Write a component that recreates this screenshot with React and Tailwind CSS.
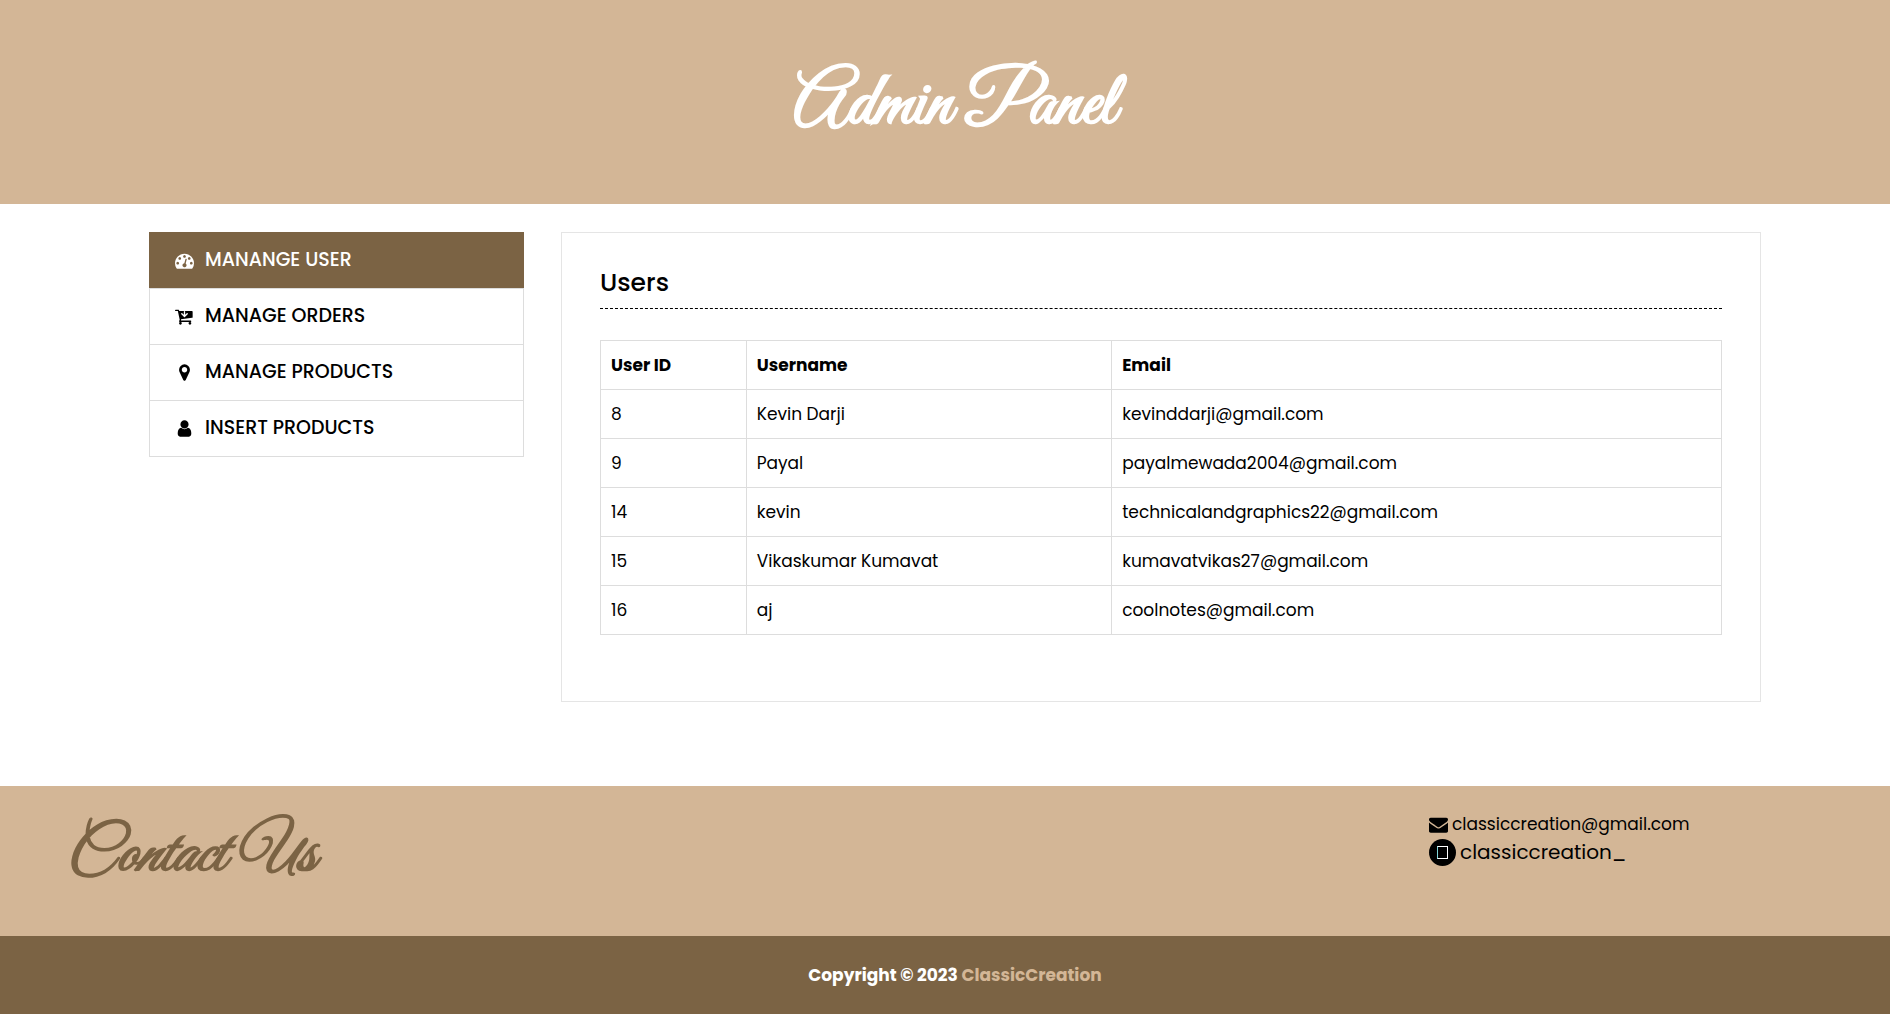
const ICONS = {
  gauge:
    "M384 1152q0-53-37.5-90.5t-90.5-37.5-90.5 37.5-37.5 90.5 37.5 90.5 90.5 37.5 90.5-37.5 37.5-90.5zm192-448q0-53-37.5-90.5t-90.5-37.5-90.5 37.5-37.5 90.5 37.5 90.5 90.5 37.5 90.5-37.5 37.5-90.5zm428 481l101-382q6-26-7.5-48.5t-38.5-29.5-48 6.5-30 39.5l-101 382q-60 5-107 43.5t-63 98.5q-20 77 20 146t117 89 146-20 89-117q16-60-6-117t-72-91zm660-33q0-53-37.5-90.5t-90.5-37.5-90.5 37.5-37.5 90.5 37.5 90.5 90.5 37.5 90.5-37.5 37.5-90.5zm-640-640q0-53-37.5-90.5t-90.5-37.5-90.5 37.5-37.5 90.5 37.5 90.5 90.5 37.5 90.5-37.5 37.5-90.5zm448 192q0-53-37.5-90.5t-90.5-37.5-90.5 37.5-37.5 90.5 37.5 90.5 90.5 37.5 90.5-37.5 37.5-90.5zm320 448q0 261-141 483-19 29-54 29h-1402q-35 0-54-29-141-221-141-483 0-182 71-348t191-286 286-191 348-71 348 71 286 191 191 286 71 348z",
  cart:
    "M1216 640q0-26-19-45t-45-19-45 19l-147 146v-293q0-26-19-45t-45-19-45 19-19 45v293l-147-146q-19-19-45-19t-45 19-19 45 19 45l256 256q19 19 45 19t45-19l256-256q19-19 19-45zm-576 896q0 53-37.5 90.5t-90.5 37.5-90.5-37.5-37.5-90.5 37.5-90.5 90.5-37.5 90.5 37.5 37.5 90.5zm896 0q0 53-37.5 90.5t-90.5 37.5-90.5-37.5-37.5-90.5 37.5-90.5 90.5-37.5 90.5 37.5 37.5 90.5zm128-1088v512q0 24-16.5 42.5t-40.5 21.5l-1044 122q13 60 13 70 0 16-24 64h920q26 0 45 19t19 45-19 45-45 19h-1024q-26 0-45-19t-19-45q0-11 8-31.5t16-36 21.5-40 15.5-29.5l-177-823h-204q-26 0-45-19t-19-45 19-45 45-19h256q16 0 28.5 6.5t19.5 15.5 13 24.5 8 26 5.5 29.5 4.5 26h1201q26 0 45 19t19 45z",
  pin:
    "M1152 640q0-106-75-181t-181-75-181 75-75 181 75 181 181 75 181-75 75-181zm256 0q0 109-33 179l-364 774q-16 33-47.5 52t-67.5 19-67.5-19-46.5-52l-365-774q-33-70-33-179 0-212 150-362t362-150 362 150 150 362z",
  user:
    "M1536 1399q0 109-62.5 187t-150.5 78h-854q-88 0-150.5-78t-62.5-187q0-85 8.5-160.5t31.5-152 58.5-131 94-89 134.5-34.5q131 128 313 128t313-128q76 0 134.5 34.5t94 89 58.5 131 31.5 152 8.5 160.5zm-256-887q0 159-112.5 271.5t-271.5 112.5-271.5-112.5-112.5-271.5 112.5-271.5 271.5-112.5 271.5 112.5 112.5 271.5z",
  envelope:
    "M1792 710v794q0 66-47 113t-113 47h-1472q-66 0-113-47t-47-113v-794q44 49 101 87 362 246 497 345 57 42 92.5 65.5t94.5 48 110 24.5h2q51 0 110-24.5t94.5-48 92.5-65.5q170-123 498-345 57-39 100-87zm0-294q0 79-49 151t-122 123q-376 261-468 325-10 7-42.5 31t-54 38.5-52 32.5-57.5 27-50 9h-2q-23 0-50-9t-57.5-27-52-32.5-54-38.5-42.5-31q-91-64-262-182.5t-205-142.5q-62-42-117-115.5t-55-136.5q0-78 41.5-130t118.5-52h1472q65 0 112.5 47t47.5 113z",
};

function Icon({ name, className }) {
  return (
    <svg viewBox="0 0 1792 1792" fill="currentColor" aria-hidden="true" className={className}>
      <path d={ICONS[name]} />
    </svg>
  );
}

const MENU = [
  { label: "MANANGE USER", icon: "gauge", active: true },
  { label: "MANAGE ORDERS", icon: "cart" },
  { label: "MANAGE PRODUCTS", icon: "pin" },
  { label: "INSERT PRODUCTS", icon: "user" },
];

const USERS = [
  { id: 8, name: "Kevin Darji", email: "kevinddarji@gmail.com" },
  { id: 9, name: "Payal", email: "payalmewada2004@gmail.com" },
  { id: 14, name: "kevin", email: "technicalandgraphics22@gmail.com" },
  { id: 15, name: "Vikaskumar Kumavat", email: "kumavatvikas27@gmail.com" },
  { id: 16, name: "aj", email: "coolnotes@gmail.com" },
];

function Sidebar() {
  return (
    <nav aria-label="Admin" className="border border-t-0 border-[#dddddd]">
      {MENU.map(({ label, icon, active }) => (
        <a
          key={label}
          href="#"
          aria-current={active ? "page" : undefined}
          className={
            active
              ? "-mx-px flex h-14 items-center gap-[11px] bg-[#7b6344] pl-[26px] text-[19px] font-medium text-white"
              : "flex h-14 items-center gap-[11px] border-t border-[#dddddd] pb-px pl-[25px] text-[19px] font-medium text-black"
          }
        >
          <Icon name={icon} className="size-[19px]" />
          {label}
        </a>
      ))}
    </nav>
  );
}

function UsersPanel() {
  return (
    <main className="border border-[#e5e5e5] px-[38px] pt-8 pb-[66px]">
      <h1 className="mb-[31px] border-b border-dashed border-black pb-[7px] text-[25px] leading-9 font-medium">
        Users
      </h1>
      <table className="w-full table-fixed border-collapse text-left text-[17px] leading-7">
        <colgroup>
          <col className="w-[13%]" />
          <col className="w-[32.6%]" />
          <col />
        </colgroup>
        <thead>
          <tr>
            {["User ID", "Username", "Email"].map((heading) => (
              <th key={heading} scope="col" className="border border-[#dddddd] px-2.5 py-2.5 font-bold">
                {heading}
              </th>
            ))}
          </tr>
        </thead>
        <tbody>
          {USERS.map(({ id, name, email }) => (
            <tr key={id}>
              <td className="border border-[#dddddd] px-2.5 py-2.5">{id}</td>
              <td className="border border-[#dddddd] px-2.5 py-2.5">{name}</td>
              <td className="border border-[#dddddd] px-2.5 py-2.5">{email}</td>
            </tr>
          ))}
        </tbody>
      </table>
    </main>
  );
}

export default function App() {
  return (
    <div className="flex min-h-screen flex-col bg-white font-['Poppins','Inter',sans-serif] text-black">
      <header className="bg-[#d3b696] pt-[58px] pb-[50px] pl-5 text-center">
        <p className="font-['Great_Vibes','Liberation_Serif',cursive] text-[75px] leading-[96px] font-bold text-white">
          Admin Panel
        </p>
      </header>

      <div className="mt-7 mb-[84px] grid grid-cols-[375fr_1200fr] items-start gap-[37px] pr-[129px] pl-[149px]">
        <Sidebar />
        <UsersPanel />
      </div>

      <footer className="flex grow flex-col">
        <div className="flex min-h-[150px] items-start justify-between bg-[#d3b696] pt-6 pr-[194px] pl-[66px]">
          <h2 className="pt-1 font-['Great_Vibes','Liberation_Serif',cursive] text-[64px] leading-[84px] font-bold text-[#7b6344] italic">
            Contact Us
          </h2>
          <address className="w-[267px] not-italic">
            <a href="mailto:classiccreation@gmail.com" className="flex items-center gap-1 text-[17px] leading-7">
              <Icon name="envelope" className="size-[19px]" />
              classiccreation@gmail.com
            </a>
            <a href="#" className="flex items-center gap-1 text-xl leading-7">
              <span className="flex size-[27px] items-center justify-center rounded-full bg-black">
                <span className="h-[13px] w-[11px] border border-white border-l-[#7fd4d8]" />
              </span>
              classiccreation_
            </a>
          </address>
        </div>
        <p className="flex grow items-center justify-center bg-[#7b6344] pl-5 text-[17px] leading-7 font-bold text-white">
          <span>
            Copyright © 2023{" "}
            <a href="#" className="text-[#d3b696]">
              ClassicCreation
            </a>
          </span>
        </p>
      </footer>
    </div>
  );
}
